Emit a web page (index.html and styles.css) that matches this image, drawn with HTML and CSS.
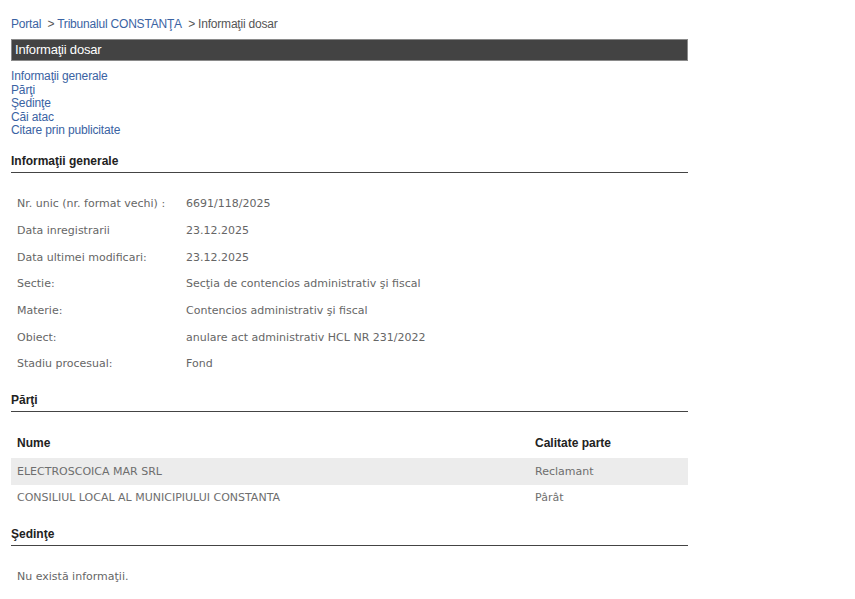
FILE: index.html
```html
<!DOCTYPE html>
<html lang="ro">
<head>
<meta charset="utf-8">
<title>Informaţii dosar</title>
<link rel="stylesheet" href="styles.css">
</head>
<body>
<div class="page">
  <div class="crumbs">
    <a href="#">Portal</a><span class="sep">&nbsp; &gt; </span><a href="#">Tribunalul CONSTANŢA</a><span class="sep">&nbsp; &gt; Informaţii dosar</span>
  </div>
  <div class="titlebar">Informaţii dosar</div>
  <nav class="toc">
    <a href="#">Informaţii generale</a>
    <a href="#">Părţi</a>
    <a href="#">Şedinţe</a>
    <a href="#">Căi atac</a>
    <a href="#">Citare prin publicitate</a>
  </nav>

  <h2 class="sec">Informaţii generale</h2>
  <div class="info">
    <div class="lbl">Nr. unic (nr. format vechi) :</div><div class="val">6691/118/2025</div>
    <div class="lbl">Data inregistrarii</div><div class="val">23.12.2025</div>
    <div class="lbl">Data ultimei modificari:</div><div class="val">23.12.2025</div>
    <div class="lbl">Sectie:</div><div class="val">Secţia de contencios administrativ şi fiscal</div>
    <div class="lbl">Materie:</div><div class="val">Contencios administrativ şi fiscal</div>
    <div class="lbl">Obiect:</div><div class="val">anulare act administrativ HCL NR 231/2022</div>
    <div class="lbl">Stadiu procesual:</div><div class="val">Fond</div>
  </div>

  <h2 class="sec">Părţi</h2>
  <div class="parties">
    <div class="prow head"><div class="c1">Nume</div><div class="c2">Calitate parte</div></div>
    <div class="prow alt"><div class="c1">ELECTROSCOICA MAR SRL</div><div class="c2">Reclamant</div></div>
    <div class="prow"><div class="c1">CONSILIUL LOCAL AL MUNICIPIULUI CONSTANTA</div><div class="c2">Pârât</div></div>
  </div>

  <h2 class="sec">Şedinţe</h2>
  <div class="empty">Nu există informaţii.</div>
</div>
</body>
</html>
```

FILE: styles.css
```css
html, body {
  margin: 0;
  padding: 0;
  background: #fff;
}
.page {
  width: 677px;
  padding: 17px 0 0 11px;
  font-family: "Liberation Sans", Arial, sans-serif;
  font-size: 12px;
}
a {
  color: #3a63a3;
  text-decoration: none;
}
.crumbs {
  line-height: 14px;
  color: #555;
  letter-spacing: -0.2px;
}
.crumbs .sep {
  color: #555;
}
.titlebar {
  margin-top: 8px;
  height: 20px;
  line-height: 20px;
  background: #434343;
  border: 1px solid #8a8a8a;
  color: #fff;
  font-size: 13px;
  padding-left: 3px;
  letter-spacing: -0.2px;
}
.toc {
  display: flex;
  flex-direction: column;
  align-items: flex-start;
  margin-top: 9px;
  line-height: 13.5px;
  letter-spacing: -0.15px;
}
.sec {
  margin: 16px 0 0 0;
  font-size: 12px;
  font-weight: bold;
  color: #222;
  line-height: 14px;
  padding-bottom: 4px;
  border-bottom: 1px solid #444;
}
.info {
  display: grid;
  grid-template-columns: 169px 1fr;
  grid-auto-rows: 26.67px;
  margin-top: 18px;
  font-family: "DejaVu Sans", Verdana, sans-serif;
  font-size: 11px;
  color: #666;
}
.info > div {
  display: flex;
  align-items: center;
  padding-left: 6px;
}
.parties {
  margin-top: 16px;
  font-family: "DejaVu Sans", Verdana, sans-serif;
  font-size: 11px;
  color: #6e6e6e;
}
.prow {
  display: grid;
  grid-template-columns: 518px 1fr;
  height: 26.5px;
  align-items: center;
}
.prow > div {
  padding-left: 6px;
}
.prow.head {
  height: 30px;
  font-family: "Liberation Sans", Arial, sans-serif;
  font-size: 12px;
  font-weight: bold;
  color: #222;
}
.prow.alt {
  background: #ececec;
}
.empty {
  margin-top: 18px;
  height: 26px;
  line-height: 26px;
  padding-left: 6px;
  font-family: "DejaVu Sans", Verdana, sans-serif;
  font-size: 11px;
  color: #666;
}
```
